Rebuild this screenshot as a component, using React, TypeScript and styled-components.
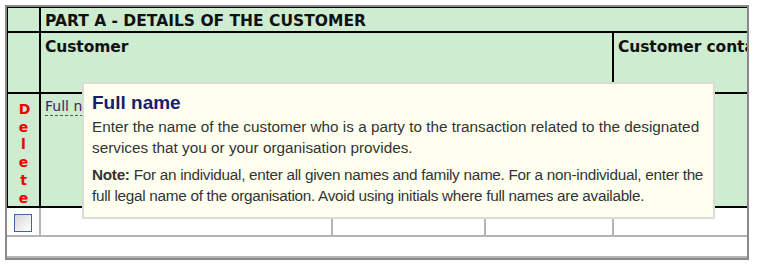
import React from 'react';
import styled, { createGlobalStyle } from 'styled-components';

const GlobalStyle = createGlobalStyle`
    html, body {
        margin: 0;
        padding: 0;
        background: #fff;
    }
`;

const Frame = styled.div`
    position: relative;
    box-sizing: border-box;
    width: 744px;
    height: 255px;
    margin: 5px 0 0 5px;
    border: 2px solid #8a8a8a;
    overflow: hidden;
    background: #fff;
`;

const Sheet = styled.div`
    display: grid;
    grid-template-columns: 34px 292px 153px 128px 320px;
    grid-template-rows: 26px 61px 114px 29px 21px;
    width: max-content;
    font-family: "DejaVu Sans", Verdana, sans-serif;
`;

type CellProps = {
    $plain?: boolean;
    $span?: number;
    $top?: boolean;
    $first?: boolean;
};

const Cell = styled.div<CellProps>`
    box-sizing: border-box;
    grid-column: span ${(p) => p.$span ?? 1};
    background: ${(p) => (p.$plain ? '#fff' : '#cdecd0')};
    border-right: 2px solid ${(p) => (p.$plain ? '#b4b4b4' : '#000')};
    border-bottom: 2px solid ${(p) => (p.$plain ? '#b4b4b4' : '#000')};
    border-top: ${(p) => (p.$top ? '1px solid #000' : 'none')};
    border-left: ${(p) => (p.$first ? '1px solid #000' : 'none')};
    overflow: hidden;
`;

const HeadCell = styled(Cell)`
    padding: 4px 4px 0;
    font-size: 15.5px;
    line-height: 18px;
    font-weight: bold;
    color: #111;
    white-space: nowrap;
`;

const TitleCell = styled(HeadCell)`
    padding-top: 5px;
    letter-spacing: -0.1px;
`;

const FieldCell = styled(Cell)`
    padding: 3px 4px 0;
    font-size: 14px;
    line-height: 18px;
    white-space: nowrap;
`;

const DeleteCell = styled(Cell)`
    display: flex;
    justify-content: center;
    padding-top: 7px;
`;

const DeleteLabel = styled.span`
    width: 1ch;
    word-break: break-all;
    text-align: center;
    font-size: 14px;
    line-height: 17.7px;
    font-weight: bold;
    color: #ee0000;
`;

const FieldName = styled.span`
    color: #3d2464;
    border-bottom: 1px dashed #555;
    padding-bottom: 1px;
`;

const FieldHint = styled.div`
    font-size: 11px;
    line-height: 12px;
    font-style: italic;
    color: #333;
    margin-top: 1px;
`;

const CheckCell = styled(Cell)`
    display: flex;
    align-items: center;
    justify-content: center;
    padding: 2px 1px 0 0;
`;

const Check = styled.span`
    box-sizing: border-box;
    display: block;
    width: 18px;
    height: 18px;
    border: 1.5px solid #3b6897;
    background: linear-gradient(135deg, #d6d6d6 0%, #f4f4f4 70%, #fff 100%);
`;

const Tooltip = styled.div`
    position: absolute;
    left: 75px;
    top: 75px;
    box-sizing: border-box;
    width: 633px;
    padding: 8px 0 11px 8px;
    background: #fffff0;
    border: 2px solid #dcdcd6;
    font-family: "Liberation Sans", Arial, sans-serif;
    color: #333;
`;

const TipTitle = styled.div`
    font-size: 19px;
    line-height: 22px;
    font-weight: bold;
    color: #1c1c6e;
    margin-bottom: 2px;
`;

const TipText = styled.p<{ $tight?: boolean }>`
    margin: 0;
    font-size: 15.3px;
    line-height: 21px;
    letter-spacing: ${(p) => (p.$tight ? '-0.28px' : 'normal')};

    & + & {
        margin-top: 6px;
    }
`;

const App = () => {
    return (
        <>
            <GlobalStyle />
            <Frame>
                <Sheet>
                    <Cell $top $first />
                    <HeadCell $top $span={4}>PART A - DETAILS OF THE CUSTOMER</HeadCell>

                    <Cell $first />
                    <TitleCell $span={3}>Customer</TitleCell>
                    <TitleCell>Customer contact details</TitleCell>

                    <DeleteCell $first>
                        <DeleteLabel>Delete</DeleteLabel>
                    </DeleteCell>
                    <FieldCell $span={3}>
                        <FieldName>Full name</FieldName>
                    </FieldCell>
                    <FieldCell>
                        <FieldName>identifier</FieldName>
                        <FieldHint>address</FieldHint>
                    </FieldCell>

                    <CheckCell $plain>
                        <Check />
                    </CheckCell>
                    <Cell $plain />
                    <Cell $plain />
                    <Cell $plain />
                    <Cell $plain />

                    <Cell $plain $span={5} />
                </Sheet>

                <Tooltip>
                    <TipTitle>Full name</TipTitle>
                    <TipText>
                        Enter the name of the customer who is a party to the transaction related to the designated
                        services that you or your organisation provides.
                    </TipText>
                    <TipText $tight>
                        <b>Note:</b> For an individual, enter all given names and family name. For a non-individual,
                        enter the full legal name of the organisation. Avoid using initials where full names are
                        available.
                    </TipText>
                </Tooltip>
            </Frame>
        </>
    );
};

export default App;
